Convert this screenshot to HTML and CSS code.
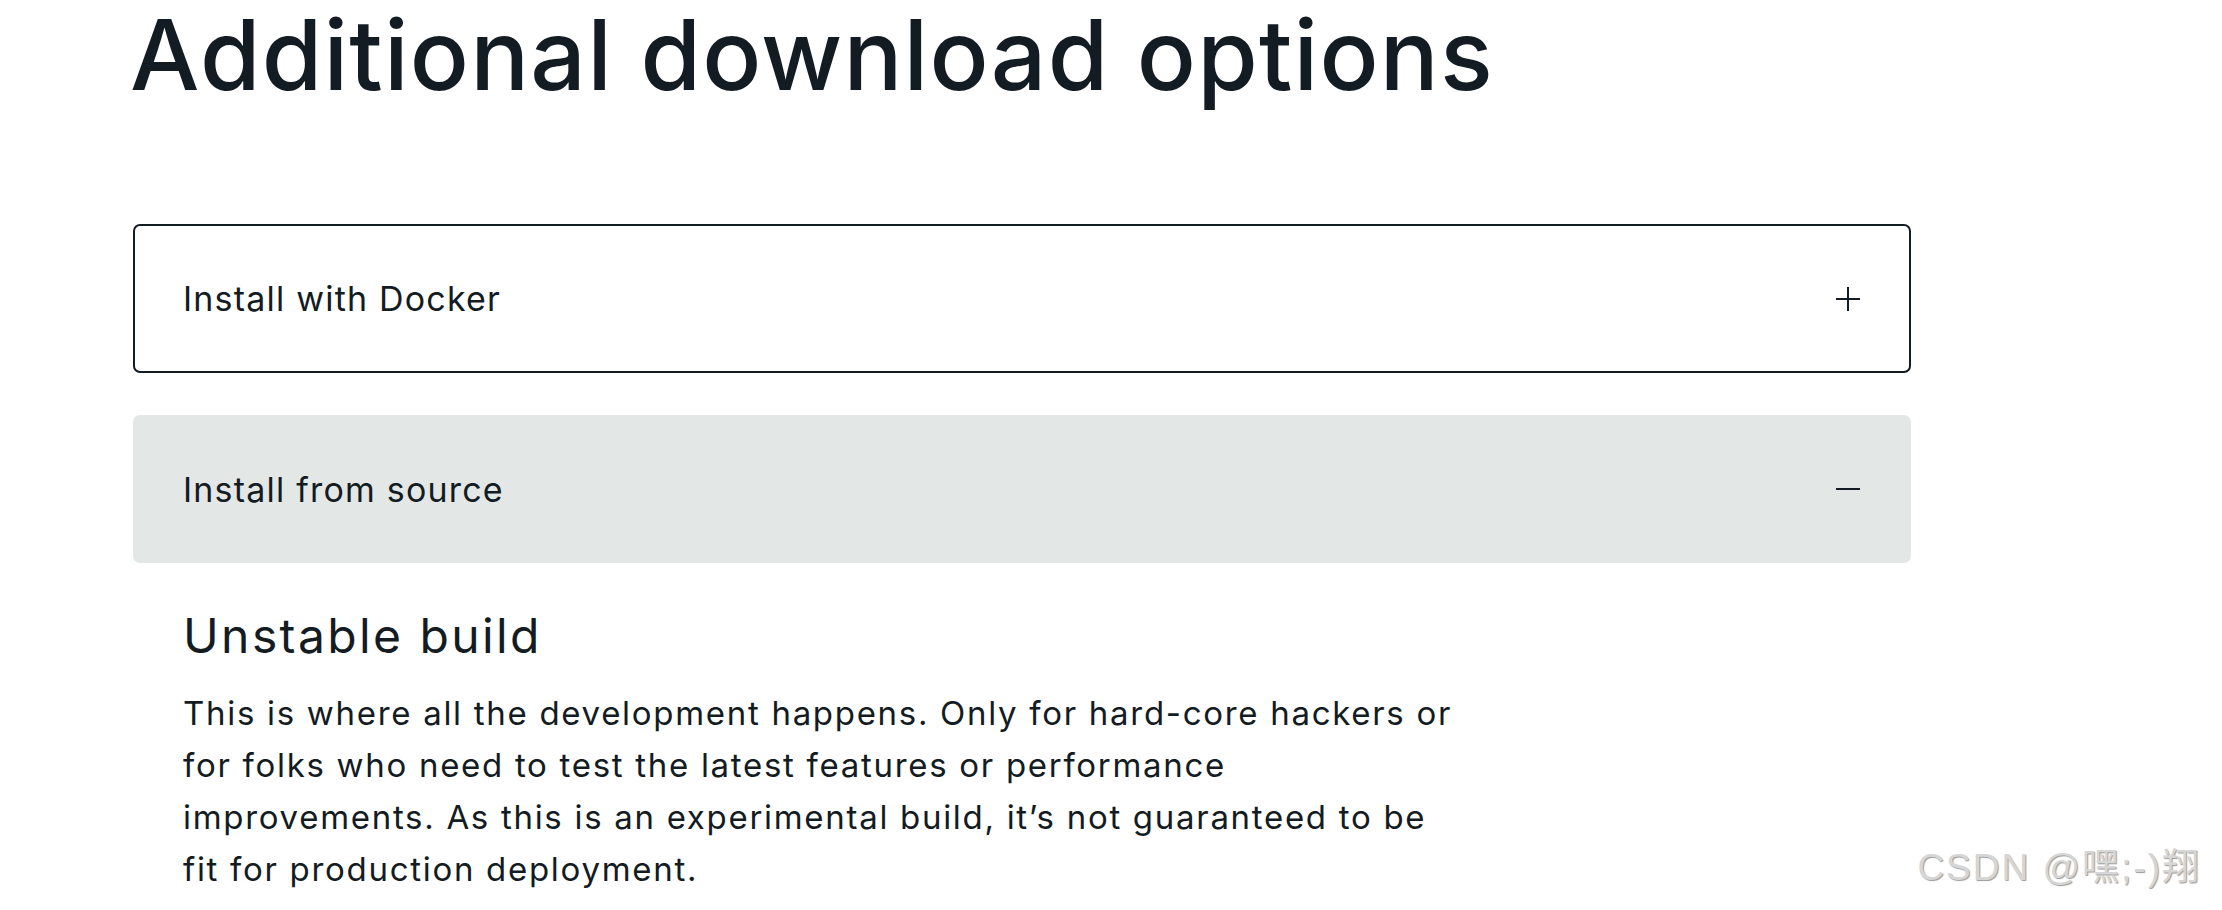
FILE: index.html
```html
<!DOCTYPE html>
<html lang="en">
<head>
  <meta charset="UTF-8">
  <meta name="viewport" content="width=device-width, initial-scale=1.0">
  <title>Additional download options</title>
  <link rel="stylesheet" href="styles.css">
</head>
<body>
  <div class="container">
    <h1>Additional download options</h1>

    <div class="accordion">
      <div class="item">
        <span>Install with Docker</span>
        <svg class="toggle" width="26" height="26" viewBox="0 0 26 26">
          <path d="M13 1v24M1 13h24" stroke="#131b23" stroke-width="2" fill="none"/>
        </svg>
      </div>

      <div class="item open">
        <span>Install from source</span>
        <svg class="toggle" width="26" height="26" viewBox="0 0 26 26">
          <path d="M1 13h24" stroke="#131b23" stroke-width="2" fill="none"/>
        </svg>
      </div>

      <div class="panel">
        <h2>Unstable build</h2>
        <p>This is where all the development happens. Only for hard-core hackers or for folks who need to test the latest features or performance improvements. As this is an experimental build, it’s not guaranteed to be fit for production deployment.</p>
      </div>
    </div>
  </div>

  <div class="watermark">CSDN @嘿;-)翔</div>
</body>
</html>
```

FILE: styles.css
```css
* {
  margin: 0;
  padding: 0;
  box-sizing: border-box;
}

body {
  font-family: Inter, "Noto Sans", sans-serif;
  color: #131b23;
  background: #fff;
  height: 910px;
  overflow: hidden;
}

.container {
  padding: 1px 0 0 133px;
  width: 1911px;
}

h1 {
  margin-left: -3px;
  font-size: 98px;
  font-weight: 500;
  line-height: 108px;
  letter-spacing: 1.2px;
}

.accordion {
  margin-top: 115px;
  display: flex;
  flex-direction: column;
}

.item {
  height: 149px;
  display: flex;
  align-items: center;
  justify-content: space-between;
  padding: 0 48px;
  border: 2px solid #131b23;
  border-radius: 7px;
  font-size: 34px;
  letter-spacing: 1.2px;
}

.item.open {
  margin-top: 42px;
  height: 148px;
  border-color: #e3e7e6;
  background: #e3e7e6;
}

.toggle {
  display: block;
}

.panel {
  padding: 44px 50px 0;
}

h2 {
  font-size: 48px;
  font-weight: 400;
  line-height: 58px;
  letter-spacing: 2.4px;
}

.panel p {
  margin-top: 22px;
  width: 1279px;
  font-size: 33px;
  line-height: 52px;
  letter-spacing: 1.7px;
}

.watermark {
  position: absolute;
  right: 21px;
  bottom: 19px;
  font-family: "Liberation Sans", "Noto Sans CJK SC", sans-serif;
  font-size: 37px;
  letter-spacing: 2px;
  color: #d6d6d6;
  text-shadow: 1px 1px 1px #9a9a9a;
}
```
